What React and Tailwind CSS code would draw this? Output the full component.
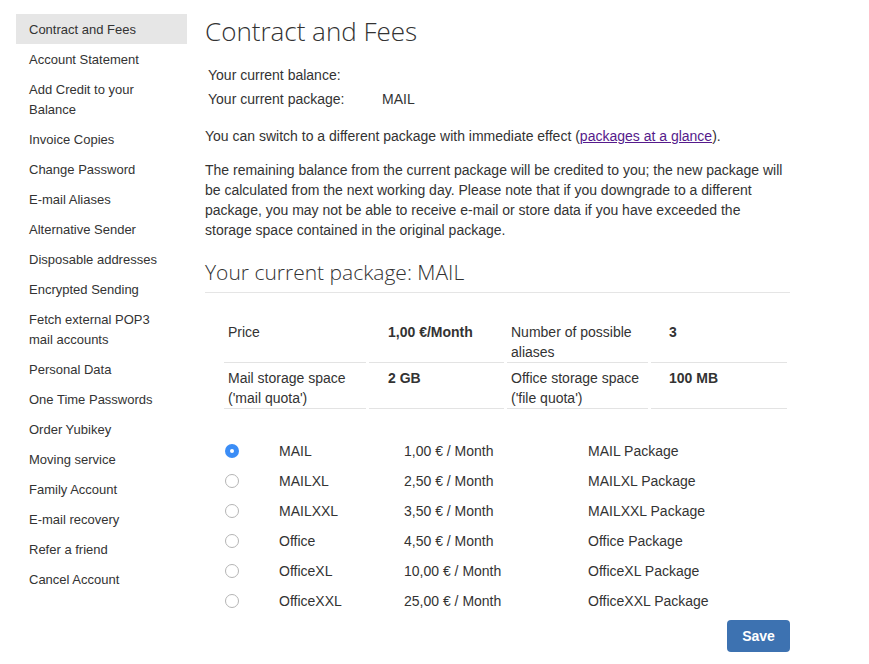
import { useState } from "react";

const menu = [
  "Contract and Fees",
  "Account Statement",
  "Add Credit to your Balance",
  "Invoice Copies",
  "Change Password",
  "E-mail Aliases",
  "Alternative Sender",
  "Disposable addresses",
  "Encrypted Sending",
  "Fetch external POP3 mail accounts",
  "Personal Data",
  "One Time Passwords",
  "Order Yubikey",
  "Moving service",
  "Family Account",
  "E-mail recovery",
  "Refer a friend",
  "Cancel Account",
];

const packages = [
  ["MAIL", "1,00 € / Month", "MAIL Package"],
  ["MAILXL", "2,50 € / Month", "MAILXL Package"],
  ["MAILXXL", "3,50 € / Month", "MAILXXL Package"],
  ["Office", "4,50 € / Month", "Office Package"],
  ["OfficeXL", "10,00 € / Month", "OfficeXL Package"],
  ["OfficeXXL", "25,00 € / Month", "OfficeXXL Package"],
];

function Radio({ checked, onClick }) {
  return (
    <button
      type="button"
      onClick={onClick}
      className={`grid h-[14px] w-[14px] place-items-center rounded-full ${checked ? "bg-[#3b8df6]" : "border border-[#b5b5b5] bg-white"}`}
    >
      {checked ? <span className="h-[4px] w-[4px] rounded-full bg-white" /> : null}
    </button>
  );
}

export default function App() {
  const [selected, setSelected] = useState("MAIL");
  const heading = { fontFamily: "'Open Sans', sans-serif" };

  return (
    <div className="flex gap-[18px] bg-white pl-4 pt-[14px] text-[#333] font-['Liberation_Sans',Arial,sans-serif]">
      <nav className="w-[171px] shrink-0 text-[13px] leading-5">
        {menu.map((item, i) => (
          <div key={item} className={`px-[13px] pb-[4px] pt-[6px] ${i === 0 ? "bg-[#e6e6e6]" : ""}`}>
            {item}
          </div>
        ))}
      </nav>

      <main className="w-[585px] text-[14px] leading-5">
        <h1 className="text-[26px] font-light leading-[34px]" style={heading}>Contract and Fees</h1>

        <table className="mt-[15px] border-collapse">
          <tbody>
            <tr>
              <td className="w-[177px] py-[2px] pl-[3px]">Your current balance:</td>
              <td className="py-[2px]"></td>
            </tr>
            <tr>
              <td className="py-[2px] pl-[3px]">Your current package:</td>
              <td className="py-[2px]">MAIL</td>
            </tr>
          </tbody>
        </table>

        <p className="mt-[15px]">
          You can switch to a different package with immediate effect (
          <a href="#" className="text-[#551a8b] underline">packages at a glance</a>).
        </p>
        <p className="mt-[14px]">
          The remaining balance from the current package will be credited to you; the new package will be calculated from the next working day. Please note that if you downgrade to a different package, you may not be able to receive e-mail or store data if you have exceeded the storage space contained in the original package.
        </p>

        <h2 className="mt-[17px] border-b border-[#e5e5e5] pb-[5px] text-[21px] font-light leading-[30px]" style={heading}>
          Your current package: MAIL
        </h2>

        <table className="ml-[16px] mt-[24px] w-[569px] border-separate border-spacing-[3px]">
          <tbody>
            <tr className="align-top">
              <td className="w-[142px] border-b border-[#e3e3e3] px-1 pt-[2px]">Price</td>
              <td className="w-[135px] border-b border-[#e3e3e3] pl-[19px] pt-[2px] font-bold">1,00 €/Month</td>
              <td className="w-[141px] border-b border-[#e3e3e3] px-1 pt-[2px]">Number of possible aliases</td>
              <td className="border-b border-[#e3e3e3] pl-[18px] pt-[2px] font-bold">3</td>
            </tr>
            <tr className="align-top">
              <td className="border-b border-[#e3e3e3] px-1 pt-[2px]">Mail storage space ('mail quota')</td>
              <td className="border-b border-[#e3e3e3] pl-[19px] pt-[2px] font-bold">2 GB</td>
              <td className="border-b border-[#e3e3e3] px-1 pt-[2px]">Office storage space ('file quota')</td>
              <td className="border-b border-[#e3e3e3] pl-[18px] pt-[2px] font-bold">100 MB</td>
            </tr>
          </tbody>
        </table>

        <div className="mt-[24px]">
          {packages.map(([name, price, desc]) => (
            <div key={name} className="flex h-[30px] items-center">
              <div className="flex w-[74px] justify-end pr-[40px]">
                <Radio checked={selected === name} onClick={() => setSelected(name)} />
              </div>
              <span className="w-[125px]">{name}</span>
              <span className="w-[184px]">{price}</span>
              <span>{desc}</span>
            </div>
          ))}
        </div>

        <div className="mt-1 flex justify-end">
          <button type="button" className="h-8 w-[63px] rounded-[4px] bg-[#3d72b1] text-[14px] font-bold text-white">
            Save
          </button>
        </div>
      </main>
    </div>
  );
}
